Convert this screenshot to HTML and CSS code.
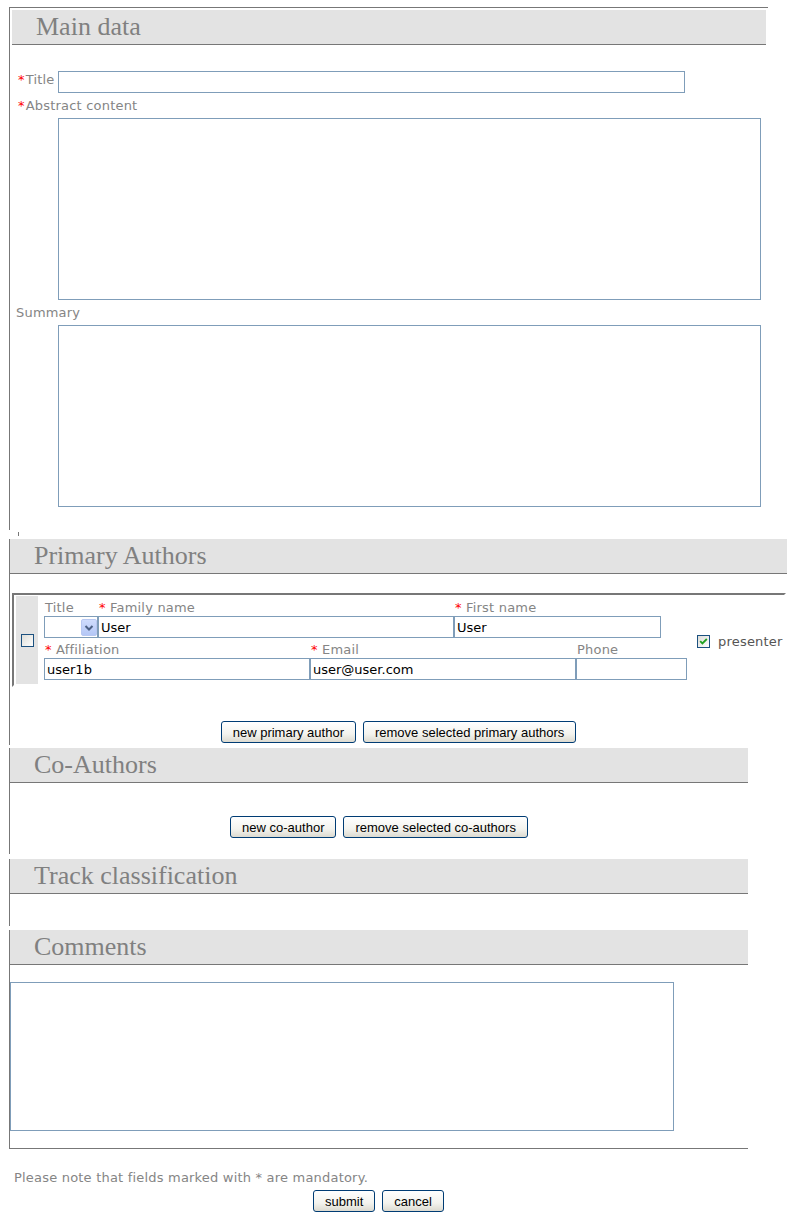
FILE: index.html
```html
<!DOCTYPE html>
<html lang="en">

<head>
    <meta charset="UTF-8">
    <meta name="viewport" content="width=device-width, initial-scale=1.0">
    <title>Submit Abstract</title>
    <link rel="stylesheet" href="styles.css">
</head>

<body>
    <form class="abstract-form">
        <div class="section section-main">
            <h2 class="section-title">Main data</h2>
            <div class="main-fields">
                <div class="field-inline">
                    <label class="field-label inline-label"><span class="req">*</span>Title</label>
                    <input type="text" class="text-input title-input">
                </div>
                <label class="field-label block-label"><span class="req">*</span>Abstract content</label>
                <textarea class="text-area indented"></textarea>
                <label class="field-label block-label">Summary</label>
                <textarea class="text-area indented"></textarea>
            </div>
        </div>
        <div class="tick"></div>

        <div class="section section-primary">
            <h2 class="section-title">Primary Authors</h2>
            <div class="author-box">
                <div class="select-cell">
                    <svg class="checkbox" width="13" height="13" viewBox="0 0 13 13">
                        <defs>
                            <linearGradient id="cbg" x1="0" y1="0" x2="1" y2="1">
                                <stop offset="0" stop-color="#dcdcd7" />
                                <stop offset="1" stop-color="#ffffff" />
                            </linearGradient>
                        </defs>
                        <rect x="0.5" y="0.5" width="12" height="12" fill="url(#cbg)" stroke="#1c5180" />
                    </svg>
                </div>
                <div class="author-fields">
                    <div class="author-row">
                        <div class="author-field w-title">
                            <label class="field-label">Title</label>
                            <div class="select-box">
                                <select class="title-select">
                                    <option></option>
                                    <option>Mr.</option>
                                    <option>Mrs.</option>
                                    <option>Dr.</option>
                                    <option>Prof.</option>
                                </select>
                                <span class="select-arrow">
                                    <svg width="14" height="15" viewBox="0 0 14 15">
                                        <path d="M3.5 6 L7 9.5 L10.5 6" fill="none" stroke="#4d6185" stroke-width="2" />
                                    </svg>
                                </span>
                            </div>
                        </div>
                        <div class="author-field w-family">
                            <label class="field-label"><span class="req">*</span> Family name</label>
                            <input type="text" class="text-input" value="User">
                        </div>
                        <div class="author-field w-first">
                            <label class="field-label"><span class="req">*</span> First name</label>
                            <input type="text" class="text-input" value="User">
                        </div>
                    </div>
                    <div class="author-row">
                        <div class="author-field w-half">
                            <label class="field-label"><span class="req">*</span> Affiliation</label>
                            <input type="text" class="text-input" value="user1b">
                        </div>
                        <div class="author-field w-half">
                            <label class="field-label"><span class="req">*</span> Email</label>
                            <input type="text" class="text-input" value="user@user.com">
                        </div>
                        <div class="author-field w-phone">
                            <label class="field-label">Phone</label>
                            <input type="text" class="text-input">
                        </div>
                    </div>
                </div>
                <div class="presenter">
                    <svg class="checkbox" width="13" height="13" viewBox="0 0 13 13">
                        <defs>
                            <linearGradient id="cbg2" x1="0" y1="0" x2="1" y2="1">
                                <stop offset="0" stop-color="#dcdcd7" />
                                <stop offset="1" stop-color="#ffffff" />
                            </linearGradient>
                        </defs>
                        <rect x="0.5" y="0.5" width="12" height="12" fill="url(#cbg2)" stroke="#1c5180" />
                        <path d="M3.2 6.2 L5.4 8.4 L9.8 4" fill="none" stroke="#21a121" stroke-width="1.8" />
                    </svg>
                    <span class="presenter-label">presenter</span>
                </div>
            </div>
            <div class="button-row primary-buttons">
                <button type="button" class="btn">new primary author</button>
                <button type="button" class="btn">remove selected primary authors</button>
            </div>
        </div>

        <div class="section section-narrow section-coauthors">
            <h2 class="section-title">Co-Authors</h2>
            <div class="button-row coauthor-buttons">
                <button type="button" class="btn">new co-author</button>
                <button type="button" class="btn">remove selected co-authors</button>
            </div>
        </div>

        <div class="section section-narrow section-track">
            <h2 class="section-title">Track classification</h2>
            <div class="track-body"></div>
        </div>

        <div class="section section-narrow section-comments">
            <h2 class="section-title">Comments</h2>
            <textarea class="text-area comments-area"></textarea>
        </div>

        <p class="note">Please note that fields marked with * are mandatory.</p>
        <div class="button-row form-buttons">
            <button type="submit" class="btn">submit</button>
            <button type="button" class="btn">cancel</button>
        </div>
    </form>
</body>

</html>
```

FILE: styles.css
```css
* {
    box-sizing: border-box;
}

body {
    margin: 0;
    font-family: "DejaVu Sans", Verdana, sans-serif;
    font-size: 13px;
    letter-spacing: 0.2px;
    color: #858585;
    background-color: #fff;
}

.abstract-form {
    padding-top: 7px;
}

/* sections */
.section {
    margin-left: 9px;
    border-left: 1px solid #777;
}

.section-title {
    margin: 0;
    height: 35px;
    line-height: 34px;
    padding-left: 24px;
    background-color: #e3e3e3;
    border-bottom: 1px solid #777;
    font-family: "Liberation Serif", "Times New Roman", serif;
    font-size: 26px;
    font-weight: normal;
    letter-spacing: 0;
    color: #808080;
}

.section-main {
    width: 759px;
    border-top: 1px solid #777;
    padding: 2px 2px 0 2px;
}

.section-primary {
    width: 778px;
    padding-bottom: 2px;
}

.section-narrow {
    width: 739px;
}

.section-coauthors {
    margin-top: 3px;
    padding-bottom: 16px;
}

.section-track {
    margin-top: 5px;
}

.section-comments {
    margin-top: 4px;
    border-bottom: 1px solid #777;
    padding-bottom: 17px;
}

.tick {
    width: 1px;
    height: 4px;
    margin: 2px 0 3px 18px;
    background-color: #777;
}

/* labels and inputs */
.field-label {
    display: block;
    line-height: 16px;
    white-space: nowrap;
}

.req {
    color: #f00;
}

.text-input {
    display: block;
    width: 100%;
    height: 22px;
    margin: 0;
    padding: 0 2px;
    border: 1px solid #7f9db9;
    font-family: "DejaVu Sans", Verdana, sans-serif;
    font-size: 13px;
    color: #000;
    background-color: #fff;
    outline: none;
}

.text-area {
    display: block;
    margin: 0;
    padding: 2px;
    border: 1px solid #7f9db9;
    resize: none;
    font-family: "DejaVu Sans", Verdana, sans-serif;
    font-size: 13px;
    background-color: #fff;
}

/* main data */
.main-fields {
    padding: 26px 0 23px 4px;
}

.main-fields .req {
    margin: 0 1px 0 2px;
}

.field-inline {
    display: flex;
    align-items: flex-start;
}

.inline-label {
    width: 42px;
    padding-top: 1px;
}

.title-input {
    width: 627px;
}

.block-label {
    margin: 5px 0 4px;
}

.text-area.indented {
    width: 703px;
    height: 182px;
    margin-left: 42px;
}

/* primary authors */
.author-box {
    display: flex;
    margin: 19px 1px 0 2px;
    padding: 1px 0 1px 2px;
    border-top: 2px solid #777;
    border-left: 2px solid #777;
    border-right: 2px solid #fff;
    border-bottom: 2px solid #fff;
}

.select-cell {
    width: 22px;
    display: flex;
    align-items: center;
    justify-content: center;
    background-color: #e3e3e3;
}

.checkbox {
    display: block;
    flex-shrink: 0;
}

.author-fields {
    margin-left: 6px;
    padding-bottom: 4px;
}

.author-row {
    display: flex;
}

.author-field .field-label {
    padding-top: 4px;
    padding-left: 1px;
}

.w-title {
    width: 54px;
}

.w-family {
    width: 356px;
}

.w-first {
    width: 207px;
}

.w-half {
    width: 266px;
}

.w-phone {
    width: 111px;
}

.select-box {
    position: relative;
    height: 22px;
}

.title-select {
    display: block;
    width: 100%;
    height: 22px;
    margin: 0;
    padding: 0 2px;
    border: 1px solid #7f9db9;
    border-radius: 0;
    background-color: #fff;
    font-family: "DejaVu Sans", Verdana, sans-serif;
    font-size: 13px;
    appearance: none;
    -webkit-appearance: none;
    outline: none;
}

.select-arrow {
    position: absolute;
    top: 3px;
    right: 1px;
    width: 16px;
    height: 17px;
    border: 1px solid #b8c8f2;
    border-radius: 2px;
    background: linear-gradient(#cfdcfd, #b4c7f6);
    pointer-events: none;
}

.select-arrow svg {
    display: block;
}

.presenter {
    display: flex;
    align-items: center;
    margin-left: 10px;
    padding-top: 2px;
}

.presenter-label {
    margin-left: 8px;
    color: #555;
}

/* buttons */
.button-row {
    display: flex;
    justify-content: center;
    gap: 7px;
}

.primary-buttons {
    margin-top: 34px;
}

.coauthor-buttons {
    margin-top: 33px;
}

.btn {
    height: 22px;
    margin: 0;
    padding: 0 11px;
    border: 1px solid #003c74;
    border-radius: 3px;
    background: linear-gradient(#ffffff, #f3f3ee 60%, #dcdad0);
    font-family: "Liberation Sans", Arial, sans-serif;
    font-size: 13px;
    letter-spacing: 0;
    color: #000;
    cursor: pointer;
}

/* track + comments */
.track-body {
    height: 32px;
}

.comments-area {
    width: 664px;
    height: 149px;
    margin-top: 17px;
}

/* footer */
.note {
    margin: 21px 0 0 14px;
    line-height: 16px;
}

.form-buttons {
    width: 739px;
    margin: 4px 0 0 9px;
}
```
